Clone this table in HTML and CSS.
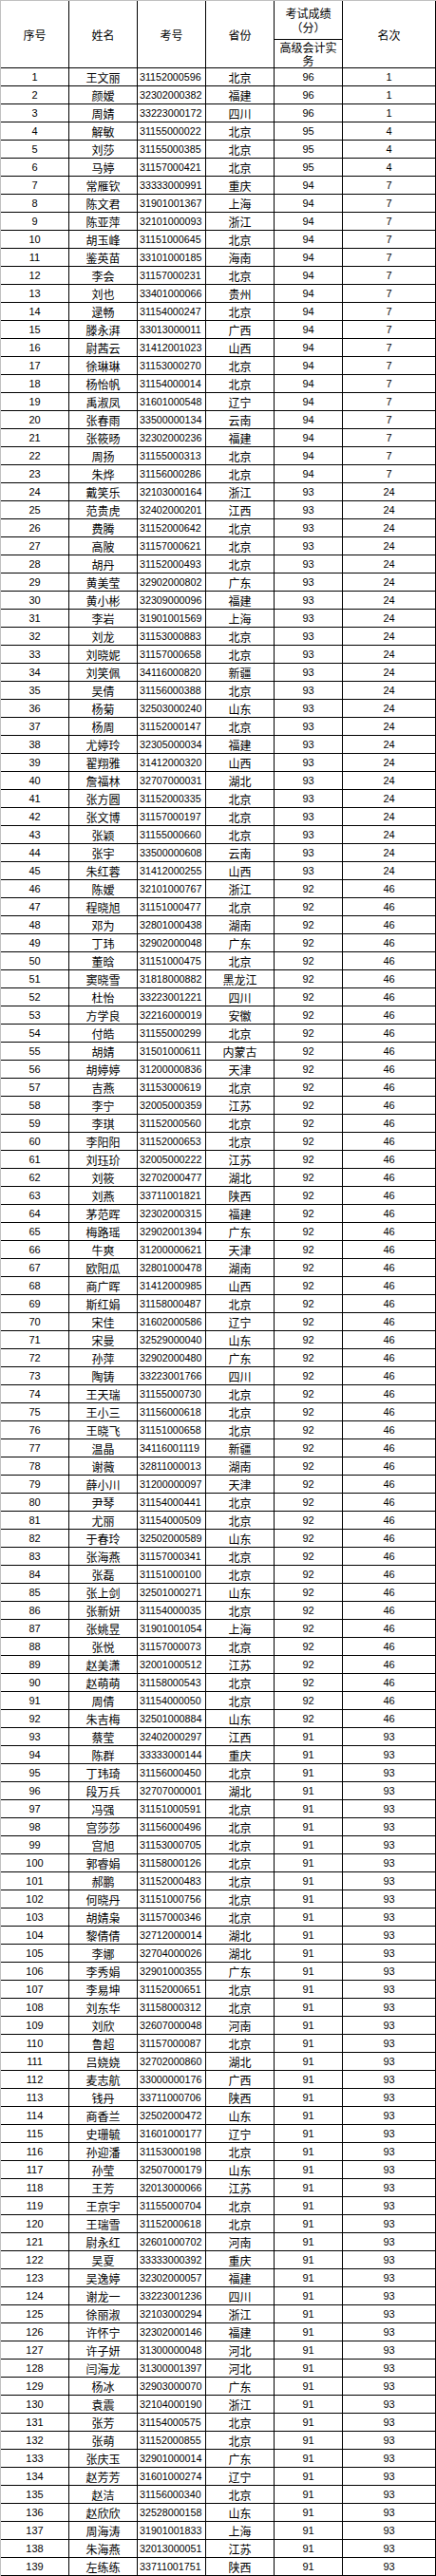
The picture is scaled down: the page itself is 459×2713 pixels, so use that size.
FILE: index.html
```html
<!DOCTYPE html>
<html lang="zh-CN">
<head>
<meta charset="utf-8">
<title>成绩名单</title>
<link rel="stylesheet" href="styles.css">
</head>
<body>
<div class="sheet">
<div class="head">
<div class="h span2">序号</div>
<div class="h span2">姓名</div>
<div class="h span2">考号</div>
<div class="h span2">省份</div>
<div class="h score">考试成绩（分）</div>
<div class="h span2 last">名次</div>
<div class="h sub">高级会计实务</div>
</div>
<div class="r"><span>1</span><span>王文丽</span><span>31152000596</span><span>北京</span><span>96</span><span>1</span></div>
<div class="r"><span>2</span><span>颜嫒</span><span>32302000382</span><span>福建</span><span>96</span><span>1</span></div>
<div class="r"><span>3</span><span>周婧</span><span>33223000172</span><span>四川</span><span>96</span><span>1</span></div>
<div class="r"><span>4</span><span>解敏</span><span>31155000022</span><span>北京</span><span>95</span><span>4</span></div>
<div class="r"><span>5</span><span>刘莎</span><span>31155000385</span><span>北京</span><span>95</span><span>4</span></div>
<div class="r"><span>6</span><span>马婷</span><span>31157000421</span><span>北京</span><span>95</span><span>4</span></div>
<div class="r"><span>7</span><span>常雁钦</span><span>33333000991</span><span>重庆</span><span>94</span><span>7</span></div>
<div class="r"><span>8</span><span>陈文君</span><span>31901001367</span><span>上海</span><span>94</span><span>7</span></div>
<div class="r"><span>9</span><span>陈亚萍</span><span>32101000093</span><span>浙江</span><span>94</span><span>7</span></div>
<div class="r"><span>10</span><span>胡玉峰</span><span>31151000645</span><span>北京</span><span>94</span><span>7</span></div>
<div class="r"><span>11</span><span>鉴英苗</span><span>33101000185</span><span>海南</span><span>94</span><span>7</span></div>
<div class="r"><span>12</span><span>李会</span><span>31157000231</span><span>北京</span><span>94</span><span>7</span></div>
<div class="r"><span>13</span><span>刘也</span><span>33401000066</span><span>贵州</span><span>94</span><span>7</span></div>
<div class="r"><span>14</span><span>逯畅</span><span>31154000247</span><span>北京</span><span>94</span><span>7</span></div>
<div class="r"><span>15</span><span>滕永湃</span><span>33013000011</span><span>广西</span><span>94</span><span>7</span></div>
<div class="r"><span>16</span><span>尉茜云</span><span>31412001023</span><span>山西</span><span>94</span><span>7</span></div>
<div class="r"><span>17</span><span>徐琳琳</span><span>31153000270</span><span>北京</span><span>94</span><span>7</span></div>
<div class="r"><span>18</span><span>杨怡帆</span><span>31154000014</span><span>北京</span><span>94</span><span>7</span></div>
<div class="r"><span>19</span><span>禹淑凤</span><span>31601000548</span><span>辽宁</span><span>94</span><span>7</span></div>
<div class="r"><span>20</span><span>张春雨</span><span>33500000134</span><span>云南</span><span>94</span><span>7</span></div>
<div class="r"><span>21</span><span>张筱旸</span><span>32302000236</span><span>福建</span><span>94</span><span>7</span></div>
<div class="r"><span>22</span><span>周扬</span><span>31155000313</span><span>北京</span><span>94</span><span>7</span></div>
<div class="r"><span>23</span><span>朱烨</span><span>31156000286</span><span>北京</span><span>94</span><span>7</span></div>
<div class="r"><span>24</span><span>戴笑乐</span><span>32103000164</span><span>浙江</span><span>93</span><span>24</span></div>
<div class="r"><span>25</span><span>范贵虎</span><span>32402000201</span><span>江西</span><span>93</span><span>24</span></div>
<div class="r"><span>26</span><span>费腾</span><span>31152000642</span><span>北京</span><span>93</span><span>24</span></div>
<div class="r"><span>27</span><span>高陂</span><span>31157000621</span><span>北京</span><span>93</span><span>24</span></div>
<div class="r"><span>28</span><span>胡丹</span><span>31152000493</span><span>北京</span><span>93</span><span>24</span></div>
<div class="r"><span>29</span><span>黄美莹</span><span>32902000802</span><span>广东</span><span>93</span><span>24</span></div>
<div class="r"><span>30</span><span>黄小彬</span><span>32309000096</span><span>福建</span><span>93</span><span>24</span></div>
<div class="r"><span>31</span><span>李岩</span><span>31901001569</span><span>上海</span><span>93</span><span>24</span></div>
<div class="r"><span>32</span><span>刘龙</span><span>31153000883</span><span>北京</span><span>93</span><span>24</span></div>
<div class="r"><span>33</span><span>刘晓妮</span><span>31157000658</span><span>北京</span><span>93</span><span>24</span></div>
<div class="r"><span>34</span><span>刘笑佩</span><span>34116000820</span><span>新疆</span><span>93</span><span>24</span></div>
<div class="r"><span>35</span><span>吴倩</span><span>31156000388</span><span>北京</span><span>93</span><span>24</span></div>
<div class="r"><span>36</span><span>杨菊</span><span>32503000240</span><span>山东</span><span>93</span><span>24</span></div>
<div class="r"><span>37</span><span>杨周</span><span>31152000147</span><span>北京</span><span>93</span><span>24</span></div>
<div class="r"><span>38</span><span>尤婷玲</span><span>32305000034</span><span>福建</span><span>93</span><span>24</span></div>
<div class="r"><span>39</span><span>翟翔雅</span><span>31412000320</span><span>山西</span><span>93</span><span>24</span></div>
<div class="r"><span>40</span><span>詹福林</span><span>32707000031</span><span>湖北</span><span>93</span><span>24</span></div>
<div class="r"><span>41</span><span>张方圆</span><span>31152000335</span><span>北京</span><span>93</span><span>24</span></div>
<div class="r"><span>42</span><span>张文博</span><span>31157000197</span><span>北京</span><span>93</span><span>24</span></div>
<div class="r"><span>43</span><span>张颖</span><span>31155000660</span><span>北京</span><span>93</span><span>24</span></div>
<div class="r"><span>44</span><span>张宇</span><span>33500000608</span><span>云南</span><span>93</span><span>24</span></div>
<div class="r"><span>45</span><span>朱红蓉</span><span>31412000255</span><span>山西</span><span>93</span><span>24</span></div>
<div class="r"><span>46</span><span>陈嫒</span><span>32101000767</span><span>浙江</span><span>92</span><span>46</span></div>
<div class="r"><span>47</span><span>程晓旭</span><span>31151000477</span><span>北京</span><span>92</span><span>46</span></div>
<div class="r"><span>48</span><span>邓为</span><span>32801000438</span><span>湖南</span><span>92</span><span>46</span></div>
<div class="r"><span>49</span><span>丁玮</span><span>32902000048</span><span>广东</span><span>92</span><span>46</span></div>
<div class="r"><span>50</span><span>董晗</span><span>31151000475</span><span>北京</span><span>92</span><span>46</span></div>
<div class="r"><span>51</span><span>窦晓雪</span><span>31818000882</span><span>黑龙江</span><span>92</span><span>46</span></div>
<div class="r"><span>52</span><span>杜怡</span><span>33223001221</span><span>四川</span><span>92</span><span>46</span></div>
<div class="r"><span>53</span><span>方学良</span><span>32216000019</span><span>安徽</span><span>92</span><span>46</span></div>
<div class="r"><span>54</span><span>付皓</span><span>31155000299</span><span>北京</span><span>92</span><span>46</span></div>
<div class="r"><span>55</span><span>胡婧</span><span>31501000611</span><span>内蒙古</span><span>92</span><span>46</span></div>
<div class="r"><span>56</span><span>胡婷婷</span><span>31200000836</span><span>天津</span><span>92</span><span>46</span></div>
<div class="r"><span>57</span><span>吉燕</span><span>31153000619</span><span>北京</span><span>92</span><span>46</span></div>
<div class="r"><span>58</span><span>李宁</span><span>32005000359</span><span>江苏</span><span>92</span><span>46</span></div>
<div class="r"><span>59</span><span>李琪</span><span>31152000560</span><span>北京</span><span>92</span><span>46</span></div>
<div class="r"><span>60</span><span>李阳阳</span><span>31152000653</span><span>北京</span><span>92</span><span>46</span></div>
<div class="r"><span>61</span><span>刘珏玠</span><span>32005000222</span><span>江苏</span><span>92</span><span>46</span></div>
<div class="r"><span>62</span><span>刘筱</span><span>32702000477</span><span>湖北</span><span>92</span><span>46</span></div>
<div class="r"><span>63</span><span>刘燕</span><span>33711001821</span><span>陕西</span><span>92</span><span>46</span></div>
<div class="r"><span>64</span><span>茅范晖</span><span>32302000315</span><span>福建</span><span>92</span><span>46</span></div>
<div class="r"><span>65</span><span>梅路瑶</span><span>32902001394</span><span>广东</span><span>92</span><span>46</span></div>
<div class="r"><span>66</span><span>牛爽</span><span>31200000621</span><span>天津</span><span>92</span><span>46</span></div>
<div class="r"><span>67</span><span>欧阳瓜</span><span>32801000478</span><span>湖南</span><span>92</span><span>46</span></div>
<div class="r"><span>68</span><span>商广晖</span><span>31412000985</span><span>山西</span><span>92</span><span>46</span></div>
<div class="r"><span>69</span><span>斯红娟</span><span>31158000487</span><span>北京</span><span>92</span><span>46</span></div>
<div class="r"><span>70</span><span>宋佳</span><span>31602000586</span><span>辽宁</span><span>92</span><span>46</span></div>
<div class="r"><span>71</span><span>宋曼</span><span>32529000040</span><span>山东</span><span>92</span><span>46</span></div>
<div class="r"><span>72</span><span>孙萍</span><span>32902000480</span><span>广东</span><span>92</span><span>46</span></div>
<div class="r"><span>73</span><span>陶铸</span><span>33223001766</span><span>四川</span><span>92</span><span>46</span></div>
<div class="r"><span>74</span><span>王天瑞</span><span>31155000730</span><span>北京</span><span>92</span><span>46</span></div>
<div class="r"><span>75</span><span>王小三</span><span>31156000618</span><span>北京</span><span>92</span><span>46</span></div>
<div class="r"><span>76</span><span>王晓飞</span><span>31151000658</span><span>北京</span><span>92</span><span>46</span></div>
<div class="r"><span>77</span><span>温晶</span><span>34116001119</span><span>新疆</span><span>92</span><span>46</span></div>
<div class="r"><span>78</span><span>谢薇</span><span>32811000013</span><span>湖南</span><span>92</span><span>46</span></div>
<div class="r"><span>79</span><span>薛小川</span><span>31200000097</span><span>天津</span><span>92</span><span>46</span></div>
<div class="r"><span>80</span><span>尹琴</span><span>31154000441</span><span>北京</span><span>92</span><span>46</span></div>
<div class="r"><span>81</span><span>尤丽</span><span>31154000509</span><span>北京</span><span>92</span><span>46</span></div>
<div class="r"><span>82</span><span>于春玲</span><span>32502000589</span><span>山东</span><span>92</span><span>46</span></div>
<div class="r"><span>83</span><span>张海燕</span><span>31157000341</span><span>北京</span><span>92</span><span>46</span></div>
<div class="r"><span>84</span><span>张磊</span><span>31151000100</span><span>北京</span><span>92</span><span>46</span></div>
<div class="r"><span>85</span><span>张上剑</span><span>32501000271</span><span>山东</span><span>92</span><span>46</span></div>
<div class="r"><span>86</span><span>张新妍</span><span>31154000035</span><span>北京</span><span>92</span><span>46</span></div>
<div class="r"><span>87</span><span>张姚昱</span><span>31901001054</span><span>上海</span><span>92</span><span>46</span></div>
<div class="r"><span>88</span><span>张悦</span><span>31157000073</span><span>北京</span><span>92</span><span>46</span></div>
<div class="r"><span>89</span><span>赵美潇</span><span>32001000512</span><span>江苏</span><span>92</span><span>46</span></div>
<div class="r"><span>90</span><span>赵萌萌</span><span>31158000543</span><span>北京</span><span>92</span><span>46</span></div>
<div class="r"><span>91</span><span>周倩</span><span>31154000050</span><span>北京</span><span>92</span><span>46</span></div>
<div class="r"><span>92</span><span>朱吉梅</span><span>32501000884</span><span>山东</span><span>92</span><span>46</span></div>
<div class="r"><span>93</span><span>蔡莹</span><span>32402000297</span><span>江西</span><span>91</span><span>93</span></div>
<div class="r"><span>94</span><span>陈群</span><span>33333000144</span><span>重庆</span><span>91</span><span>93</span></div>
<div class="r"><span>95</span><span>丁玮琦</span><span>31156000450</span><span>北京</span><span>91</span><span>93</span></div>
<div class="r"><span>96</span><span>段万兵</span><span>32707000001</span><span>湖北</span><span>91</span><span>93</span></div>
<div class="r"><span>97</span><span>冯强</span><span>31151000591</span><span>北京</span><span>91</span><span>93</span></div>
<div class="r"><span>98</span><span>宫莎莎</span><span>31156000496</span><span>北京</span><span>91</span><span>93</span></div>
<div class="r"><span>99</span><span>宫旭</span><span>31153000705</span><span>北京</span><span>91</span><span>93</span></div>
<div class="r"><span>100</span><span>郭睿娟</span><span>31158000126</span><span>北京</span><span>91</span><span>93</span></div>
<div class="r"><span>101</span><span>郝鹏</span><span>31152000483</span><span>北京</span><span>91</span><span>93</span></div>
<div class="r"><span>102</span><span>何晓丹</span><span>31151000756</span><span>北京</span><span>91</span><span>93</span></div>
<div class="r"><span>103</span><span>胡婧枭</span><span>31157000346</span><span>北京</span><span>91</span><span>93</span></div>
<div class="r"><span>104</span><span>黎倩倩</span><span>32712000014</span><span>湖北</span><span>91</span><span>93</span></div>
<div class="r"><span>105</span><span>李娜</span><span>32704000026</span><span>湖北</span><span>91</span><span>93</span></div>
<div class="r"><span>106</span><span>李秀娟</span><span>32901000355</span><span>广东</span><span>91</span><span>93</span></div>
<div class="r"><span>107</span><span>李易坤</span><span>31152000651</span><span>北京</span><span>91</span><span>93</span></div>
<div class="r"><span>108</span><span>刘东华</span><span>31158000312</span><span>北京</span><span>91</span><span>93</span></div>
<div class="r"><span>109</span><span>刘欣</span><span>32607000048</span><span>河南</span><span>91</span><span>93</span></div>
<div class="r"><span>110</span><span>鲁超</span><span>31157000087</span><span>北京</span><span>91</span><span>93</span></div>
<div class="r"><span>111</span><span>吕娆娆</span><span>32702000860</span><span>湖北</span><span>91</span><span>93</span></div>
<div class="r"><span>112</span><span>麦志航</span><span>33000000176</span><span>广西</span><span>91</span><span>93</span></div>
<div class="r"><span>113</span><span>钱丹</span><span>33711000706</span><span>陕西</span><span>91</span><span>93</span></div>
<div class="r"><span>114</span><span>商香兰</span><span>32502000472</span><span>山东</span><span>91</span><span>93</span></div>
<div class="r"><span>115</span><span>史珊毓</span><span>31601000177</span><span>辽宁</span><span>91</span><span>93</span></div>
<div class="r"><span>116</span><span>孙迎潘</span><span>31153000198</span><span>北京</span><span>91</span><span>93</span></div>
<div class="r"><span>117</span><span>孙莹</span><span>32507000179</span><span>山东</span><span>91</span><span>93</span></div>
<div class="r"><span>118</span><span>王芳</span><span>32013000066</span><span>江苏</span><span>91</span><span>93</span></div>
<div class="r"><span>119</span><span>王京宇</span><span>31155000704</span><span>北京</span><span>91</span><span>93</span></div>
<div class="r"><span>120</span><span>王瑞雪</span><span>31152000618</span><span>北京</span><span>91</span><span>93</span></div>
<div class="r"><span>121</span><span>尉永红</span><span>32601000702</span><span>河南</span><span>91</span><span>93</span></div>
<div class="r"><span>122</span><span>吴夏</span><span>33333000392</span><span>重庆</span><span>91</span><span>93</span></div>
<div class="r"><span>123</span><span>吴逸婷</span><span>32302000057</span><span>福建</span><span>91</span><span>93</span></div>
<div class="r"><span>124</span><span>谢龙一</span><span>33223001236</span><span>四川</span><span>91</span><span>93</span></div>
<div class="r"><span>125</span><span>徐丽淑</span><span>32103000294</span><span>浙江</span><span>91</span><span>93</span></div>
<div class="r"><span>126</span><span>许怀宁</span><span>32302000146</span><span>福建</span><span>91</span><span>93</span></div>
<div class="r"><span>127</span><span>许子妍</span><span>31300000048</span><span>河北</span><span>91</span><span>93</span></div>
<div class="r"><span>128</span><span>闫海龙</span><span>31300001397</span><span>河北</span><span>91</span><span>93</span></div>
<div class="r"><span>129</span><span>杨冰</span><span>32903000070</span><span>广东</span><span>91</span><span>93</span></div>
<div class="r"><span>130</span><span>袁震</span><span>32104000190</span><span>浙江</span><span>91</span><span>93</span></div>
<div class="r"><span>131</span><span>张芳</span><span>31154000575</span><span>北京</span><span>91</span><span>93</span></div>
<div class="r"><span>132</span><span>张萌</span><span>31152000855</span><span>北京</span><span>91</span><span>93</span></div>
<div class="r"><span>133</span><span>张庆玉</span><span>32901000014</span><span>广东</span><span>91</span><span>93</span></div>
<div class="r"><span>134</span><span>赵芳芳</span><span>31601000274</span><span>辽宁</span><span>91</span><span>93</span></div>
<div class="r"><span>135</span><span>赵洁</span><span>31156000340</span><span>北京</span><span>91</span><span>93</span></div>
<div class="r"><span>136</span><span>赵欣欣</span><span>32528000158</span><span>山东</span><span>91</span><span>93</span></div>
<div class="r"><span>137</span><span>周海涛</span><span>31901001833</span><span>上海</span><span>91</span><span>93</span></div>
<div class="r"><span>138</span><span>朱海燕</span><span>32013000051</span><span>江苏</span><span>91</span><span>93</span></div>
<div class="r"><span>139</span><span>左练练</span><span>33711001751</span><span>陕西</span><span>91</span><span>93</span></div>
</div>
</body>
</html>
```

FILE: styles.css
```css
html, body {
  margin: 0;
  padding: 0;
  background: #ffffff;
}

.sheet {
  width: 459px;
  box-sizing: border-box;
  border-left: 1px solid #c0c0c0;
  border-top: 1px solid #c0c0c0;
  color: #000000;
  font-family: "Liberation Sans", "Noto Sans CJK SC", sans-serif;
}

.head {
  display: grid;
  grid-template-columns: 72px 72px 72px 72px 72px 98px;
  grid-template-rows: 41px 30px;
}

.h {
  box-sizing: border-box;
  border-right: 1px solid #000000;
  border-bottom: 1px solid #000000;
  font-family: "Noto Sans CJK SC", sans-serif;
  font-size: 12px;
  line-height: 15px;
  text-align: center;
}

.span2 {
  grid-row: span 2;
  display: flex;
  align-items: center;
  justify-content: center;
}

.score {
  grid-column: 5;
  grid-row: 1;
  display: flex;
  align-items: center;
  justify-content: center;
}

.last {
  grid-column: 6;
  grid-row: 1 / span 2;
}

.sub {
  grid-column: 5;
  grid-row: 2;
  padding-top: 1px;
  line-height: 14px;
}

.r {
  display: grid;
  grid-template-columns: 72px 72px 72px 72px 72px 98px;
  height: 19px;
}

.r > span {
  box-sizing: border-box;
  border-right: 1px solid #000000;
  border-bottom: 1px solid #000000;
  padding-top: 1px;
  line-height: 17px;
  font-size: 11px;
  text-align: center;
  white-space: nowrap;
  overflow: hidden;
}

.r > span:nth-child(2),
.r > span:nth-child(4) {
  font-family: "Noto Sans CJK SC", sans-serif;
  font-size: 12px;
}

.r > span:nth-child(3) {
  text-align: left;
  padding-left: 2px;
  font-size: 10.7px;
}
```
